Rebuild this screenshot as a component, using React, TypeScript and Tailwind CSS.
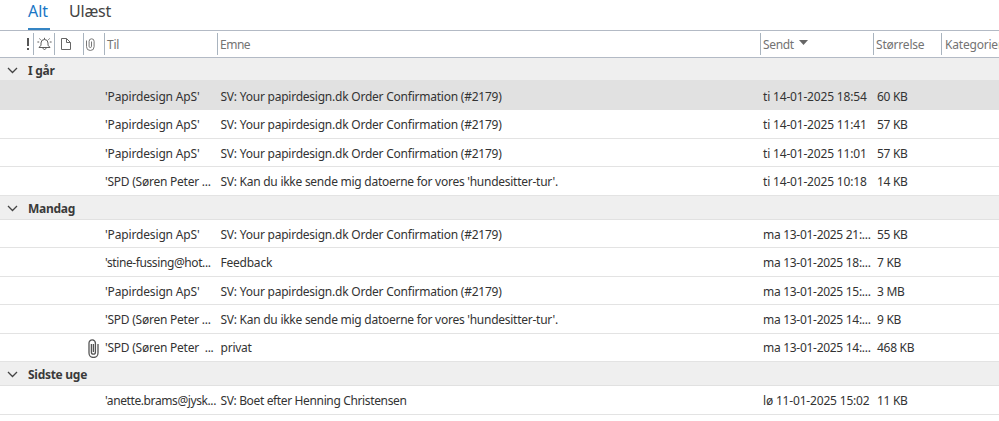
type Mail = { to: string; subject: string; sent: string; size: string; h: string; selected?: boolean; clip?: boolean };
type Group = { name: string; h: string; mails: Mail[] };

const order = 'SV: Your papirdesign.dk Order Confirmation (#2179)';
const dates = "SV: Kan du ikke sende mig datoerne for vores 'hundesitter-tur'.";

const groups: Group[] = [
  {
    name: 'I går',
    h: 'h-[23px] pt-[3px]',
    mails: [
      { to: "'Papirdesign ApS'", subject: order, sent: 'ti 14-01-2025 18:54', size: '60 KB', h: 'h-[29px] pt-[3px]', selected: true },
      { to: "'Papirdesign ApS'", subject: order, sent: 'ti 14-01-2025 11:41', size: '57 KB', h: 'h-[29px] pt-[2px]' },
      { to: "'Papirdesign ApS'", subject: order, sent: 'ti 14-01-2025 11:01', size: '57 KB', h: 'h-[28px] pt-[2px]' },
      { to: "'SPD (Søren Peter ...", subject: dates, sent: 'ti 14-01-2025 10:18', size: '14 KB', h: 'h-[29px] pt-[2px]' },
    ],
  },
  {
    name: 'Mandag',
    h: 'h-[24px] pt-[2px]',
    mails: [
      { to: "'Papirdesign ApS'", subject: order, sent: 'ma 13-01-2025 21:...', size: '55 KB', h: 'h-[28px] pt-[2px]' },
      { to: "'stine-fussing@hot...", subject: 'Feedback', sent: 'ma 13-01-2025 18:...', size: '7 KB', h: 'h-[29px] pt-[2px]' },
      { to: "'Papirdesign ApS'", subject: order, sent: 'ma 13-01-2025 15:...', size: '3 MB', h: 'h-[28px] pt-[2px]' },
      { to: "'SPD (Søren Peter ...", subject: dates, sent: 'ma 13-01-2025 14:...', size: '9 KB', h: 'h-[29px] pt-[2px]' },
      { to: "'SPD (Søren Peter \u00a0...", subject: 'privat', sent: 'ma 13-01-2025 14:...', size: '468 KB', h: 'h-[28px] pt-[1px]', clip: true },
    ],
  },
  {
    name: 'Sidste uge',
    h: 'h-[24px] pt-[2px]',
    mails: [
      { to: "'anette.brams@jysk...", subject: 'SV: Boet efter Henning Christensen', sent: 'lø 11-01-2025 15:02', size: '11 KB', h: 'h-[29px] pt-[2px]' },
    ],
  },
];

function toTracking(text: string) {
  if (text.includes('@')) return 'tracking-[-0.4px]';
  return text.startsWith("'Pap") ? 'tracking-[-0.15px]' : 'tracking-[-0.24px]';
}

function subjectTracking(text: string) {
  if (text.startsWith('SV: Boet')) return 'tracking-[-0.36px]';
  return text === dates ? 'tracking-[-0.26px]' : 'tracking-[-0.23px]';
}

function Clip({ className, strokeWidth }: { className: string; strokeWidth: number }) {
  return (
    <svg viewBox="0 0 11 19" fill="none" stroke="currentColor" strokeWidth={strokeWidth} className={className}>
      <path d="M3.4 5v8.2a2 2 0 0 0 4 0V4.2a3.2 3.2 0 0 0-6.4-.2v10a4.5 4.5 0 0 0 9 0V5M5.4 5v8" />
    </svg>
  );
}

function Header() {
  return (
    <div className="flex h-[28px] items-center border-y border-[#b3bac5] tracking-[-0.2px] text-[#737373]">
      <div className="flex h-[22px] w-[34px] items-center justify-end border-r border-[#a9b4bf] pr-[3px]">
        <svg viewBox="0 0 4 12" className="h-[12px] w-[4px]" fill="#555">
          <path d="M1 0h2v8H1zM1 10h2v2H1z" />
        </svg>
      </div>
      <div className="flex h-[22px] w-[21px] items-center justify-center border-r border-[#a9b4bf]">
        <svg viewBox="0 0 15 14" className="h-[14px] w-[15px]" fill="none" stroke="#5c5c5c">
          <path d="M2 10.5h11l-2-2.3V6a3.5 3.5 0 0 0-7 0v2.2zM6 11c.2 2 2.8 2 3 0M7.5 .8v1.5M2.4 1.6l1.2 1M12.6 1.6l-1.2 1M.4 5h1.8M12.8 5h1.8" />
        </svg>
      </div>
      <div className="flex h-[22px] w-[29px] items-center border-r border-[#a9b4bf] pl-[6px]">
        <svg viewBox="0 0 10 12" className="h-[12px] w-[10px]" fill="none" stroke="#666">
          <path d="M.5.5h5l4 4v7H.5zM5.5.5v4h4" />
        </svg>
      </div>
      <div className="flex h-[22px] w-[21px] items-center border-r border-[#a9b4bf] pl-[2px]">
        <svg viewBox="0 0 9 13" className="h-[13px] w-[9px]" fill="none" stroke="#777">
          <path d="M.5 2.5v6.2a3.8 3.8 0 0 0 7.6 0V3.3a2.5 2.5 0 0 0-5 0v5a1.2 1.2 0 0 0 2.4 0V3.5" />
        </svg>
      </div>
      <div className="flex h-[22px] w-[113px] items-center border-r border-[#a9b4bf] pt-[1px] pl-[2px]">Til</div>
      <div className="flex h-[22px] w-[543px] items-center border-r border-[#a9b4bf] pt-[1px] pl-[2px] tracking-[-0.5px]">Emne</div>
      <div className="flex h-[22px] w-[113px] items-center gap-[5px] border-r border-[#a9b4bf] pt-[1px] pl-[2px]">
        <span className="tracking-[-0.35px]">Sendt</span>
        <svg viewBox="0 0 9 5" className="-mt-[4px] h-[5px] w-[9px]" fill="#666">
          <path d="M0 0h9L4.5 5z" />
        </svg>
      </div>
      <div className="flex h-[22px] w-[68px] items-center border-r border-[#a9b4bf] pt-[1px] pl-[2px]">Størrelse</div>
      <div className="flex h-[22px] w-[57px] items-center overflow-hidden pt-[1px] pl-[3px]">Kategorier</div>
    </div>
  );
}

export default function App() {
  return (
    <div className="h-[421px] w-[999px] overflow-hidden whitespace-pre bg-white font-['Noto_Sans','Open_Sans',sans-serif] text-[12px] leading-4 text-[#333]">
      <div className="flex h-[30px] gap-[19px] pl-[28px] text-[16px] leading-[22px]">
        <div className="h-full w-[22px] border-b-2 border-[#3585c4] text-[#1976c5]">Alt</div>
        <div className="tracking-[-0.2px] text-[#444]">Ulæst</div>
      </div>
      <Header />
      {groups.map((g) => (
        <section key={g.name}>
          <div className={`flex items-center border-b border-[#e1e1e1] bg-[#efefef] pl-[7px] ${g.h}`}>
            <svg viewBox="0 0 11 7" className="mr-[10px] h-[7px] w-[11px]" fill="none" stroke="#444" strokeWidth="1.3">
              <path d="M1 1l4.5 4.5L10 1" />
            </svg>
            <span className="font-bold tracking-[-0.28px] text-[#3a3a3a]">{g.name}</span>
          </div>
          {g.mails.map((m, i) => (
            <div key={i} className={`flex items-center border-b ${m.h} ${m.selected ? 'border-[#e1e1e1] bg-[#e1e1e1]' : 'border-[#e3e3e3]'}`}>
              <div className="flex w-[105px] pl-[88px]">{m.clip && <Clip className="h-[19px] w-[11px] text-[#555]" strokeWidth={1.3} />}</div>
              <div className={`w-[115.5px] ${toTracking(m.to)}`}>{m.to}</div>
              <div className={`w-[542.5px] ${subjectTracking(m.subject)}`}>{m.subject}</div>
              <div className={`w-[114px] ${m.sent.startsWith('ma') ? 'tracking-[-0.29px]' : 'tracking-[-0.18px]'}`}>{m.sent}</div>
              <div className="tracking-[-0.3px]">{m.size}</div>
            </div>
          ))}
        </section>
      ))}
    </div>
  );
}
